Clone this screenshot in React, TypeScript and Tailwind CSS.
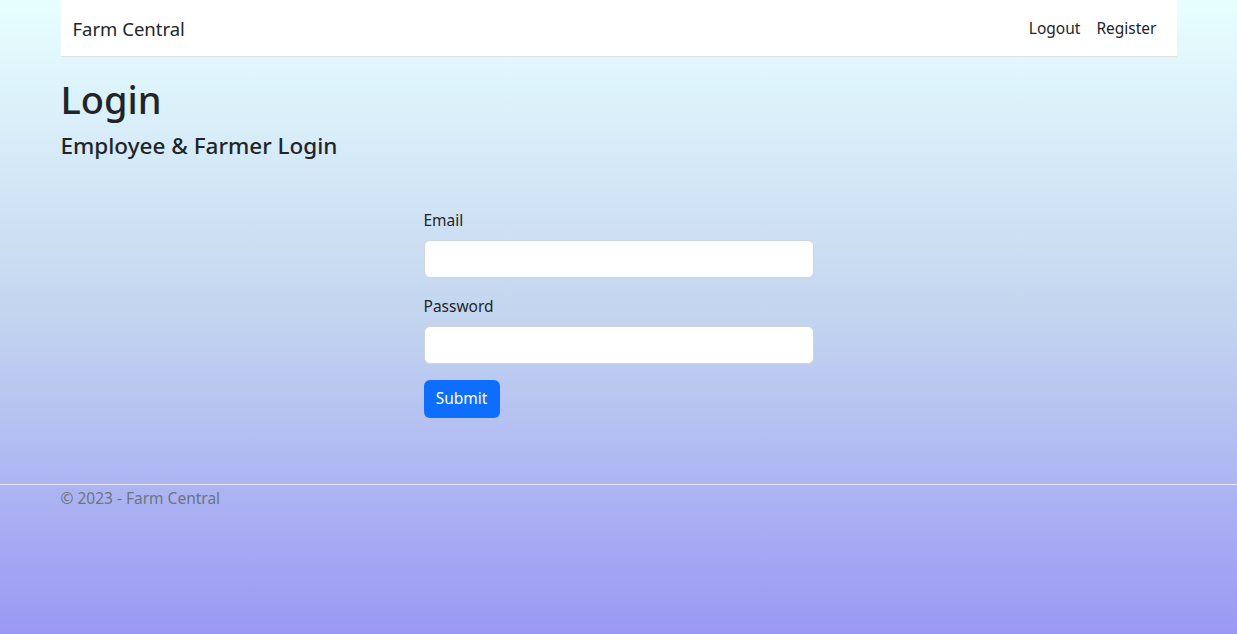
export default function App() {
  return (
    <div
      className="min-h-screen flex flex-col bg-gradient-to-b from-[#e8ffff] via-[#c3d5ef] to-[#9b98f4] text-[#212529]"
      style={{ fontFamily: '"Segoe UI", "Noto Sans", "Liberation Sans", sans-serif' }}
    >
      <div className="w-[1116px] mx-auto">
        <nav className="h-[57px] bg-white border-b border-[#dee2e6] flex items-center justify-between px-3 pt-[2px]">
          <span className="text-[18.5px] text-[#212529]">Farm Central</span>
          <div className="flex items-center">
            <a className="px-2 text-[15.5px] text-[#212529]">Logout</a>
            <a className="px-2 text-[15.5px] text-[#212529]">Register</a>
          </div>
        </nav>
        <main className="pt-[18px]">
          <h1 className="text-[38px] leading-[48px] font-medium mb-2">Login</h1>
          <h4 className="text-[22.5px] leading-[29px] font-medium">Employee &amp; Farmer Login</h4>
          <form className="w-[390px] mx-auto mt-[48px] flex flex-col">
            <label className="text-[15.5px] leading-6 mb-2">Email</label>
            <input
              type="email"
              className="h-[38px] bg-white border border-[#ced4da] rounded-[6px] mb-4"
            />
            <label className="text-[15.5px] leading-6 mb-2">Password</label>
            <input
              type="password"
              className="h-[38px] bg-white border border-[#ced4da] rounded-[6px] mb-4"
            />
            <div>
              <button
                type="button"
                className="h-[38px] w-[76px] bg-[#0d6efd] text-white text-[15.5px] rounded-[6px]"
              >
                Submit
              </button>
            </div>
          </form>
        </main>
      </div>
      <footer className="mt-[66px] border-t border-[#e4e8f5]">
        <div className="w-[1116px] mx-auto text-[#6c757d] text-[15.5px] leading-6 pt-px">
          © 2023 - Farm Central
        </div>
      </footer>
    </div>
  );
}
